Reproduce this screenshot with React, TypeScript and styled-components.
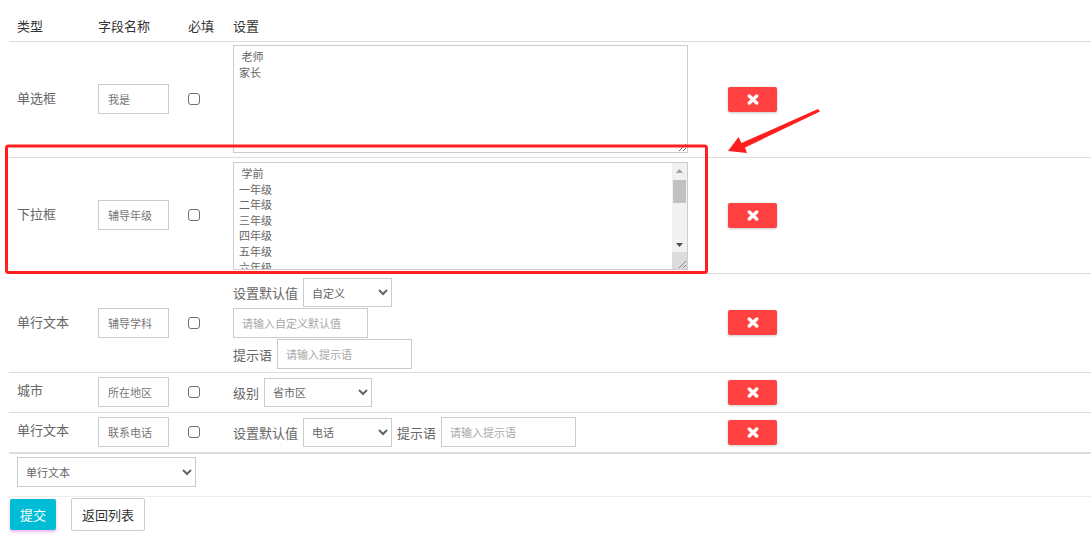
import React from 'react'
import styled, { createGlobalStyle } from 'styled-components'

const GlobalStyle = createGlobalStyle`
  body {
    margin: 0;
    background: #fff;
    font-family: "Noto Sans CJK SC", "Noto Sans", sans-serif;
  }
`

const Page = styled.div`
  position: relative;
  width: 1091px;
  height: 542px;
  box-sizing: border-box;
  padding: 10px 0 0 9px;
  overflow: hidden;
`

const FieldTable = styled.table`
  width: 100%;
  border-collapse: collapse;
  table-layout: fixed;
  font-size: 13px;
  color: #666;
`

const Col = styled.col<{ $w?: number }>`
  width: ${({ $w }) => ($w ? `${$w}px` : 'auto')};
`

const HeadCell = styled.th`
  text-align: left;
  font-weight: normal;
  color: #333;
  padding: 8px;
  line-height: 15px;
  border-bottom: 1px solid #ddd;
`

const Row = styled.tr<{ $thick?: boolean }>`
  border-bottom: ${({ $thick }) => ($thick ? '2px' : '1px')} solid #ddd;
`

const Cell = styled.td<{ $pt?: number; $pb?: number }>`
  padding: ${({ $pt = 4 }) => $pt}px 8px ${({ $pb = 5 }) => $pb}px;
  vertical-align: middle;
  line-height: 15px;
`

const TypeCell = styled(Cell)`
  padding-bottom: ${({ $pb = 5 }) => $pb + 3}px;
`

const TopCell = styled(Cell)`
  vertical-align: top;
`

const NameInput = styled.input`
  display: block;
  width: 71px;
  height: 30px;
  box-sizing: border-box;
  border: 1px solid #ccc;
  padding: 0 9px;
  font-family: inherit;
  font-size: 11px;
  color: #777;
  outline: none;
`

const Check = styled.input`
  appearance: none;
  display: block;
  width: 12px;
  height: 12px;
  margin: 0;
  border: 1px solid #707070;
  border-radius: 3px;
  background: #fff;
`

const AreaWrap = styled.div`
  position: relative;
  width: 455px;
`

const OptionArea = styled.textarea<{ $scroll?: boolean }>`
  display: block;
  width: 455px;
  height: 108px;
  box-sizing: border-box;
  border: 1px solid #ccc;
  padding: 3px ${({ $scroll }) => ($scroll ? '20px' : '5px')} 3px 5px;
  font-family: inherit;
  font-size: 11px;
  line-height: 15.6px;
  color: #666;
  outline: none;
  overflow: hidden;
`

/* headless page draws no scrollbars, so the list's bar is drawn over the textarea */
const FakeScrollbar = styled.div`
  position: absolute;
  top: 1px;
  right: 1px;
  bottom: 1px;
  width: 15px;
  display: flex;
  flex-direction: column;
  background: #f1f1f1;
  pointer-events: none;
`

const ScrollButton = styled.div`
  height: 15px;
  display: flex;
  align-items: center;
  justify-content: center;
`

const ScrollTrack = styled.div`
  flex: 1;
  padding: 2px 1px 0;
`

const ScrollThumb = styled.div`
  height: 23px;
  background: #c1c1c1;
`

const ScrollCorner = styled.div`
  height: 17px;
  background: #dcdcdc;
  display: flex;
  align-items: flex-end;
  justify-content: flex-end;
`

const Stack = styled.div`
  display: flex;
  flex-direction: column;
  gap: 1px;
`

const Line = styled.div`
  display: flex;
  align-items: center;
  gap: 5px;
`

const Label = styled.span`
  font-size: 13px;
  color: #666;
  white-space: nowrap;
`

const TextInput = styled.input<{ $w: number }>`
  display: block;
  width: ${({ $w }) => $w}px;
  height: 30px;
  box-sizing: border-box;
  border: 1px solid #ccc;
  padding: 0 8px;
  font-family: inherit;
  font-size: 11px;
  color: #666;
  outline: none;

  &::placeholder {
    color: #a8a8a8;
  }
`

const Select = styled.select<{ $w: number; $h?: number }>`
  display: block;
  width: ${({ $w }) => $w}px;
  height: ${({ $h = 30 }) => $h}px;
  box-sizing: border-box;
  border: 1px solid #ccc;
  border-radius: 0;
  background: #fff;
  padding: 0 4px;
  font-family: inherit;
  font-size: 11px;
  color: #666;
  outline: none;
`

const DeleteButton = styled.button`
  display: flex;
  align-items: center;
  justify-content: center;
  width: 49px;
  height: 25px;
  padding: 0;
  border: none;
  border-radius: 2px;
  background: #ff4141;
  box-shadow: 0 1px 3px rgba(0, 0, 0, 0.22);
  cursor: pointer;
`

const ButtonBar = styled.div`
  display: flex;
  align-items: center;
  gap: 15px;
  height: 35px;
  padding-left: 1px;
  border-top: 1px solid #eee;
`

const SubmitButton = styled.button`
  width: 46px;
  height: 31px;
  border: none;
  border-radius: 2px;
  background: #00bcd4;
  color: #fff;
  font-family: inherit;
  font-size: 13px;
  box-shadow: 0 2px 3px rgba(214, 96, 230, 0.45);
  cursor: pointer;
`

const BackButton = styled.button`
  width: 74px;
  height: 33px;
  border: 1px solid #ccc;
  border-radius: 2px;
  background: #fff;
  color: #333;
  font-family: inherit;
  font-size: 13px;
  cursor: pointer;
`

const Annotation = styled.svg`
  position: absolute;
  top: 0;
  left: 0;
  pointer-events: none;
`

function RemoveIcon() {
  return (
    <svg width="12" height="11" viewBox="0 0 12 11">
      <path d="M2.3 2 L9.7 9 M9.7 2 L2.3 9" stroke="#fff" strokeWidth="3.4" strokeLinecap="round" />
    </svg>
  )
}

function ListArea({ value }: { value: string }) {
  return (
    <AreaWrap>
      <OptionArea $scroll defaultValue={value} />
      <FakeScrollbar aria-hidden>
        <ScrollButton>
          <svg width="7" height="4" viewBox="0 0 7 4">
            <path d="M3.5 0 L7 4 L0 4 Z" fill="#a3a3a3" />
          </svg>
        </ScrollButton>
        <ScrollTrack>
          <ScrollThumb />
        </ScrollTrack>
        <ScrollButton>
          <svg width="7" height="4" viewBox="0 0 7 4">
            <path d="M0 0 L7 0 L3.5 4 Z" fill="#505050" />
          </svg>
        </ScrollButton>
        <ScrollCorner>
          <svg width="10" height="10" viewBox="0 0 10 10">
            <path d="M9 2 L2 9 M9 6 L6 9" stroke="#888" strokeWidth="1" />
          </svg>
        </ScrollCorner>
      </FakeScrollbar>
    </AreaWrap>
  )
}

const grades = ['学前', '一年级', '二年级', '三年级', '四年级', '五年级', '六年级', '七年级', '八年级', '九年级', '高一', '高二', '高三', '大学', '其他']

export default function App() {
  return (
    <Page>
      <GlobalStyle />
      <FieldTable>
        <colgroup>
          <Col $w={81} />
          <Col $w={90} />
          <Col $w={45} />
          <Col $w={495} />
          <Col />
        </colgroup>
        <thead>
          <tr>
            <HeadCell>类型</HeadCell>
            <HeadCell>字段名称</HeadCell>
            <HeadCell>必填</HeadCell>
            <HeadCell>设置</HeadCell>
            <HeadCell />
          </tr>
        </thead>
        <tbody>
          <Row>
            <TypeCell>单选框</TypeCell>
            <Cell><NameInput defaultValue="我是" /></Cell>
            <Cell><Check type="checkbox" /></Cell>
            <TopCell $pt={3} $pb={4}>
              <OptionArea defaultValue={' 老师\n家长'} />
            </TopCell>
            <Cell><DeleteButton><RemoveIcon /></DeleteButton></Cell>
          </Row>
          <Row>
            <TypeCell>下拉框</TypeCell>
            <Cell><NameInput defaultValue="辅导年级" /></Cell>
            <Cell><Check type="checkbox" /></Cell>
            <TopCell $pt={4} $pb={3}>
              <ListArea value={' ' + grades.join('\n')} />
            </TopCell>
            <Cell><DeleteButton><RemoveIcon /></DeleteButton></Cell>
          </Row>
          <Row>
            <TypeCell>单行文本</TypeCell>
            <Cell><NameInput defaultValue="辅导学科" /></Cell>
            <Cell><Check type="checkbox" /></Cell>
            <Cell $pt={4} $pb={3}>
              <Stack>
                <Line>
                  <Label>设置默认值</Label>
                  <Select $w={89} $h={29} defaultValue="custom">
                    <option value="custom">自定义</option>
                    <option value="phone">电话</option>
                  </Select>
                </Line>
                <Line>
                  <TextInput $w={135} placeholder="请输入自定义默认值" />
                </Line>
                <Line>
                  <Label>提示语</Label>
                  <TextInput $w={135} placeholder="请输入提示语" />
                </Line>
              </Stack>
            </Cell>
            <Cell><DeleteButton><RemoveIcon /></DeleteButton></Cell>
          </Row>
          <Row>
            <TypeCell $pb={7}>城市</TypeCell>
            <Cell><NameInput defaultValue="所在地区" /></Cell>
            <Cell><Check type="checkbox" /></Cell>
            <Cell>
              <Line>
                <Label>级别</Label>
                <Select $w={108} $h={29} defaultValue="pcd">
                  <option value="pcd">省市区</option>
                  <option value="pc">省市</option>
                </Select>
              </Line>
            </Cell>
            <Cell><DeleteButton><RemoveIcon /></DeleteButton></Cell>
          </Row>
          <Row $thick>
            <TypeCell $pb={7}>单行文本</TypeCell>
            <Cell><NameInput defaultValue="联系电话" /></Cell>
            <Cell><Check type="checkbox" /></Cell>
            <Cell>
              <Line>
                <Label>设置默认值</Label>
                <Select $w={89} $h={29} defaultValue="phone">
                  <option value="custom">自定义</option>
                  <option value="phone">电话</option>
                </Select>
                <Label>提示语</Label>
                <TextInput $w={135} placeholder="请输入提示语" />
              </Line>
            </Cell>
            <Cell><DeleteButton><RemoveIcon /></DeleteButton></Cell>
          </Row>
        </tbody>
        <tfoot>
          <tr>
            <Cell colSpan={5} $pt={3} $pb={9}>
              <Select $w={179} defaultValue="text">
                <option value="text">单行文本</option>
                <option value="radio">单选框</option>
                <option value="select">下拉框</option>
                <option value="city">城市</option>
              </Select>
            </Cell>
          </tr>
        </tfoot>
      </FieldTable>
      <ButtonBar>
        <SubmitButton>提交</SubmitButton>
        <BackButton>返回列表</BackButton>
      </ButtonBar>
      <Annotation width="1091" height="542" viewBox="0 0 1091 542">
        <rect x="6.5" y="146" width="700" height="126.5" rx="2" fill="none" stroke="#ff1f1f" strokeWidth="3" />
        <polygon points="728,151 738.5,137 741.5,143 818,109 820,111.5 745,147.5 747,153" fill="#ff1f1f" />
      </Annotation>
    </Page>
  )
}
